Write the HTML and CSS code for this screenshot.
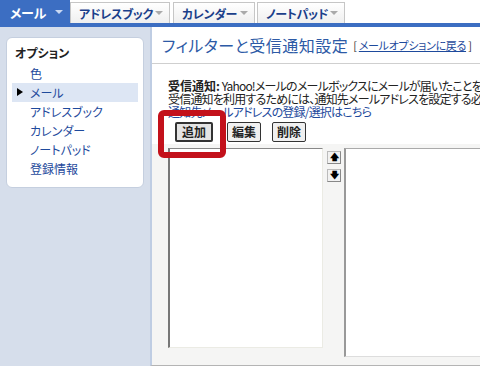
FILE: index.html
```html
<!DOCTYPE html>
<html lang="ja">
<head>
    <meta charset="UTF-8">
    <title>フィルターと受信通知設定</title>
    <link rel="stylesheet" href="styles.css">
</head>
<body>

    <div class="tabbar">
        <div class="tab active">メール<span class="arrow"></span></div>
        <div class="tab tab-address">アドレスブック<span class="arrow"></span></div>
        <div class="tab tab-calendar">カレンダー<span class="arrow"></span></div>
        <div class="tab tab-notepad">ノートパッド<span class="arrow"></span></div>
    </div>

    <div class="page">
        <div class="sidebar">
            <div class="side-box">
                <div class="side-title">オプション</div>
                <a class="side-item">色</a>
                <a class="side-item current"><span class="bullet"></span>メール</a>
                <a class="side-item">アドレスブック</a>
                <a class="side-item">カレンダー</a>
                <a class="side-item">ノートパッド</a>
                <a class="side-item">登録情報</a>
            </div>
        </div>

        <div class="content">
            <div class="header">
                <h1>フィルターと受信通知設定</h1>
                <span class="back">[ <a>メールオプションに戻る</a> ]</span>
            </div>
            <div class="body">
                <p class="notice"><b>受信通知:</b> Yahoo!メールのメールボックスにメールが届いたことを、お知らせします。<br>
                受信通知を利用するためには、通知先メールアドレスを設定する必要があります。<br>
                <a>通知先メールアドレスの登録/選択はこちら</a></p>

                <div class="buttons">
                    <button class="pressed">追加</button>
                    <button class="btn-edit">編集</button>
                    <button>削除</button>
                </div>

                <div class="lists">
                    <div class="listbox"></div>
                    <div class="movers">
                        <span class="mover">&#129093;</span>
                        <span class="mover">&#129095;</span>
                    </div>
                    <div class="detail"></div>
                </div>

                <div class="highlight"></div>
            </div>
        </div>
    </div>

</body>
</html>
```

FILE: styles.css
```css
body {
    margin: 0;
    font-family: "Noto Sans CJK JP", "Noto Sans", sans-serif;
    font-feature-settings: "palt";
    font-size: 12px;
    background-color: #fff;
    overflow: hidden;
    width: 480px;
    height: 366px;
}
a {
    color: #1e4a9c;
}
.tabbar {
    display: flex;
    height: 23px;
    border-bottom: 4px solid #3c6ec2;
    align-items: flex-end;
}
.tab {
    display: flex;
    align-items: center;
    justify-content: space-between;
    box-sizing: border-box;
    height: 21px;
    margin-right: 2px;
    padding: 0 6px 0 8px;
    background: linear-gradient(#ffffff, #efefef);
    border: 1px solid #c6c6c6;
    border-bottom: none;
    color: #1b3f8a;
    font-weight: bold;
    font-size: 12px;
    white-space: nowrap;
    letter-spacing: -0.3px;
}
.tab.active {
    width: 70px;
    height: 23px;
    padding-left: 9px;
    margin-right: 0;
    background-color: #3c6ec2;
    background-image: none;
    border-color: #3c6ec2;
    color: #fff;
    font-size: 13px;
}
.tab-address {
    width: 100px;
}
.tab-calendar {
    width: 82px;
    margin-left: 1px;
}
.tab-notepad {
    width: 88px;
    margin-left: 0;
}
.arrow {
    flex: none;
    width: 0;
    height: 0;
    border-left: 4px solid transparent;
    border-right: 4px solid transparent;
    border-top: 4px solid #aaa;
}
.tab.active .arrow {
    border-top-color: #c9d8f2;
}
.page {
    display: flex;
    height: 339px;
}
.sidebar {
    flex: none;
    width: 150px;
    background-color: #d6deeb;
    padding: 10px 6px 0 6px;
    box-sizing: border-box;
}
.side-box {
    background-color: #fff;
    border: 1px solid #c5cfdf;
    border-radius: 6px;
    height: 151px;
    box-sizing: border-box;
    padding: 5px 5px 0 5px;
}
.side-title {
    font-weight: bold;
    color: #222;
    height: 19px;
    line-height: 19px;
    margin-bottom: 2px;
    padding-left: 3px;
}
.side-item {
    display: flex;
    align-items: center;
    height: 19px;
    padding-left: 18px;
    color: #1e4a9c;
    text-decoration: none;
    position: relative;
}
.side-item.current {
    background-color: #dde6f4;
}
.bullet {
    position: absolute;
    left: 5px;
    top: 5px;
    width: 0;
    height: 0;
    border-top: 4px solid transparent;
    border-bottom: 4px solid transparent;
    border-left: 6px solid #000;
}
.content {
    flex: 1;
    min-width: 0;
    overflow: hidden;
    background-color: #f5f5f4;
    border-left: 2px solid #bfcde3;
    border-bottom: 1px solid #b4b4b4;
    box-sizing: border-box;
    position: relative;
}
.header {
    display: flex;
    align-items: center;
    height: 36px;
    padding-left: 10px;
    background-color: #fff;
    border-bottom: 1px solid #cfcfcf;
    white-space: nowrap;
}
h1 {
    margin: 0;
    font-size: 16px;
    font-weight: normal;
    color: #2d5aa6;
    letter-spacing: 0.5px;
}
.back {
    margin-left: 5px;
    font-size: 11px;
    color: #333;
    letter-spacing: -0.3px;
}
.back a {
    text-decoration: underline;
}
.body {
    padding: 15px 0 0 16px;
    background: linear-gradient(#ffffff 0, #ffffff 80px, #f5f5f4 80px);
}
.notice {
    margin: 0;
    line-height: 13px;
    white-space: nowrap;
    color: #222;
    letter-spacing: -0.8px;
}
.notice b {
    letter-spacing: 0;
}
.notice a {
    text-decoration: none;
}
.buttons {
    display: flex;
    gap: 11px;
    margin: 4px 0 0 7px;
}
button {
    font-family: inherit;
    font-size: 12px;
    font-weight: bold;
    height: 20px;
    padding: 0 4px;
    background-color: #f0f0f0;
    border: 1px solid #333;
    border-radius: 2px;
    color: #222;
    line-height: 16px;
}
button.pressed {
    background-color: #e4e4e4;
    border-width: 2px;
    padding: 0 5px;
}
.btn-edit {
    margin-left: 3px;
}
.lists {
    display: flex;
    margin-top: 6px;
}
.listbox {
    width: 155px;
    height: 200px;
    background-color: #fff;
    border-left: 2px solid #777;
    border-top: 1px solid #888;
    border-right: 1px solid #ebebe4;
    border-bottom: 1px solid #ebebe4;
    box-sizing: border-box;
}
.movers {
    display: flex;
    flex-direction: column;
    gap: 5px;
    margin: 3px 3px 0 4px;
}
.mover {
    width: 12px;
    height: 11px;
    background-color: #f2f2f2;
    border: 1px solid #bbb;
    border-right-color: #888;
    border-bottom-color: #888;
    font-size: 9px;
    line-height: 11px;
    text-align: center;
    font-weight: bold;
    font-family: "DejaVu Sans", sans-serif;
}
.detail {
    flex: 1;
    height: 209px;
    background-color: #fff;
    border-left: 2px solid #999;
    border-top: 1px solid #aaa;
    border-bottom: 1px solid #ddd;
    box-sizing: border-box;
}
.highlight {
    position: absolute;
    left: 6px;
    top: 83px;
    width: 56px;
    height: 36px;
    border: 6px solid #c3111b;
    border-radius: 6px;
}
```
